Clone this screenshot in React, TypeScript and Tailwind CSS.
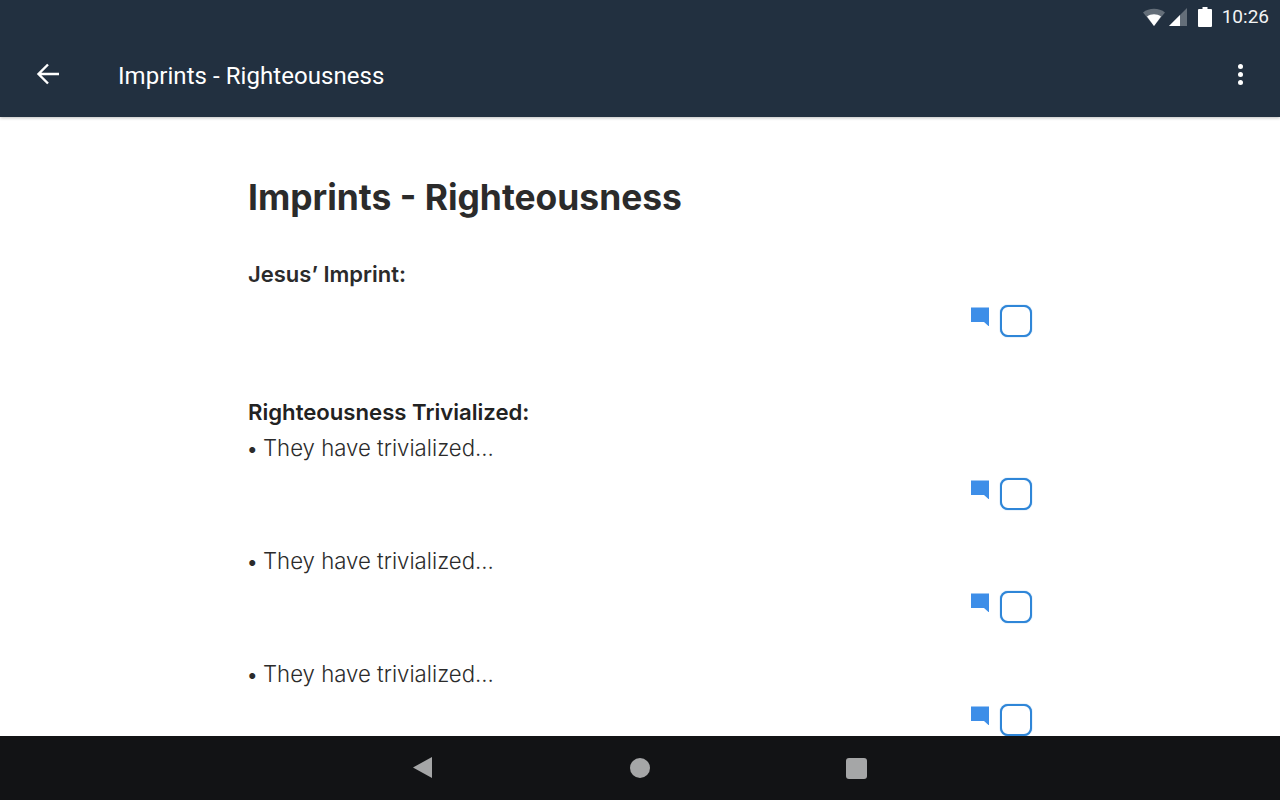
const bodyFont = { fontFamily: 'Inter, "Open Sans", sans-serif' }

function Row({ text }: { text?: string }) {
  return (
    <div className="mb-[38px]">
      {text && (
        <p className="mb-[17px] h-[26px] text-[22.2px] font-light leading-[26px] text-[#2b2b2b]">
          <span className="ml-[-2px] inline-block w-[17px]">•</span>
          {text}
        </p>
      )}
      <div className="flex h-[32px] items-start justify-end gap-[10px]">
        <svg width="20" height="20" viewBox="0 0 20 20" className="mt-[1px]">
          <path d="M1 1.5h18v19l-5-4.5H1z" fill="#3d8ee8" />
        </svg>
        <div className="h-[32px] w-[32px] rounded-[8px] border-2 border-[#2f86d8] bg-white shadow-[0_0_1px_#2f86d8]" />
      </div>
    </div>
  )
}

export default function App() {
  return (
    <div className="flex h-[800px] w-[1280px] flex-col overflow-hidden bg-white">
      <header className="relative z-10 h-[117px] shrink-0 bg-[#223040] shadow-[0_1px_3px_rgba(0,0,0,0.25)]">
        <div className="flex h-[34px] items-center justify-end gap-[9px] pr-[11px] text-[#f2f4f5]">
          <svg width="24" height="20" viewBox="0 0 24 20">
            <path d="M1 5.5C7 .5 17 .5 23 5.5L12 19z" fill="#fff" fillOpacity="0.3" />
            <path d="M5 9.5c4-3 10-3 14 0L12 19z" fill="#fff" />
          </svg>
          <svg width="20" height="20" viewBox="0 0 20 20" className="ml-[-7px]">
            <path d="M19 1v18H1z" fill="#fff" fillOpacity="0.3" />
            <path d="M12 8v11H1z" fill="#fff" />
          </svg>
          <svg width="14" height="20" viewBox="0 0 14 20" className="ml-[1px]">
            <path d="M4.5 0h5v2H13a1 1 0 0 1 1 1v16a1 1 0 0 1-1 1H1a1 1 0 0 1-1-1V3a1 1 0 0 1 1-1h3.5z" fill="#fff" />
          </svg>
          <span className="ml-[1px] text-[19px] font-[Roboto]">10:26</span>
        </div>
        <div className="flex h-[83px] items-center pl-[36px] pr-[37px] text-white">
          <svg width="24" height="24" viewBox="0 0 24 24" className="mb-[3px]">
            <path d="M23 12H3M12 2.5 2.5 12l9.5 9.5" fill="none" stroke="#fff" strokeWidth="2.4" />
          </svg>
          <h1 className="ml-[58px] flex-1 text-[24px] tracking-[0.06px] font-[Roboto]">Imprints - Righteousness</h1>
          <div className="mb-[3px] flex flex-col gap-[3px]">
            <span className="h-[5px] w-[5px] rounded-full bg-white" />
            <span className="h-[5px] w-[5px] rounded-full bg-white" />
            <span className="h-[5px] w-[5px] rounded-full bg-white" />
          </div>
        </div>
      </header>

      <main className="min-h-0 flex-1 overflow-hidden pl-[248px] pt-[55px]" style={bodyFont}>
        <div className="w-[784px]">
          <h2 className="h-[52px] text-[35.4px] font-bold leading-[52px] text-[#2b2b2b]">Imprints - Righteousness</h2>
          <h3 className="mb-[18px] mt-[37px] text-[22px] font-semibold leading-[26px] text-[#2b2b2b]">Jesus’ Imprint:</h3>
          <Row />
          <h3 className="mb-[10px] mt-[62px] text-[22.15px] font-semibold leading-[26px] text-[#222]">Righteousness Trivialized:</h3>
          <Row text="They have trivialized..." />
          <Row text="They have trivialized..." />
          <Row text="They have trivialized..." />
        </div>
      </main>

      <nav className="relative z-10 flex h-[64px] shrink-0 items-center bg-[#121315] pl-[410px]">
        <svg width="24" height="24" viewBox="0 0 24 24" className="mb-[1px]">
          <path d="M22 1v21L3 11.5z" fill="#a5a6a7" />
        </svg>
        <span className="ml-[196px] h-[20px] w-[20px] rounded-full bg-[#a5a6a7]" />
        <span className="ml-[196px] h-[21px] w-[21px] rounded-[3px] bg-[#a5a6a7]" />
      </nav>
    </div>
  )
}
